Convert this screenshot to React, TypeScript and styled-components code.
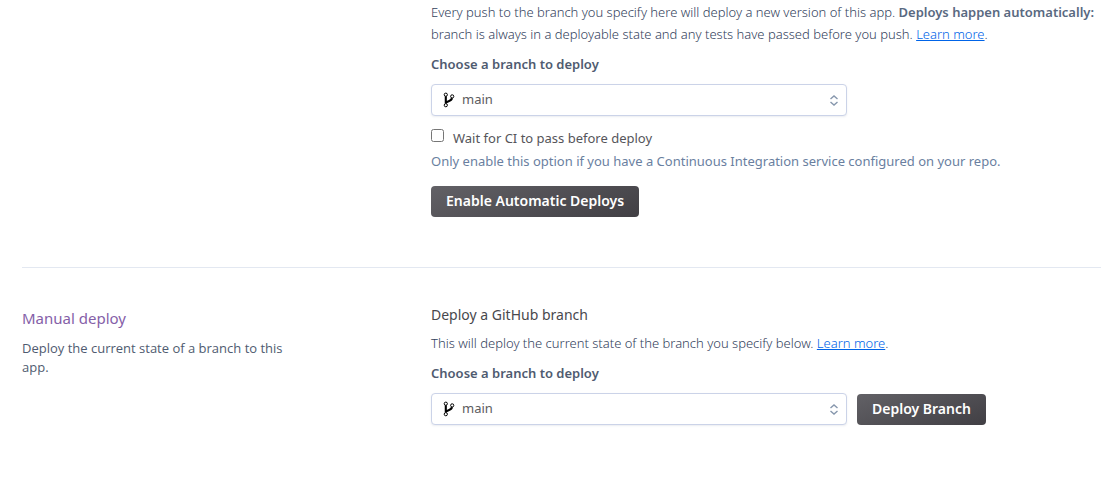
import React from 'react';
import styled, { createGlobalStyle } from 'styled-components';

const GlobalStyle = createGlobalStyle`
  * { box-sizing: border-box; }
  body {
    margin: 0;
    background: #fff;
    color: #596981;
    font: 400 13px/22px "Noto Sans", sans-serif;
    overflow-x: hidden;
  }
`;

const Page = styled.main`
  padding-left: 22px;
  overflow: hidden;
`;

const Section = styled.section`
  display: grid;
  grid-template-columns: 409px minmax(0, 1fr);
  padding: 39px 0 50px;

  & + & { border-top: 1px solid #e3e8f1; }
  &:first-child { padding-top: 1px; }
`;

const Side = styled.div`
  max-width: 270px;
`;

const SideTitle = styled.h2`
  margin: 0 0 10px;
  font-size: 15px;
  line-height: 22px;
  font-weight: 400;
  color: #8560a8;
`;

const SideText = styled.p`
  margin: 0;
  font-family: "Open Sans", "Noto Sans", sans-serif;
  line-height: 19px;
  color: #4f5b70;
`;

const Content = styled.div`
  min-width: 0;
`;

const Title = styled.h3`
  margin: 0 0 9px;
  font-size: 14px;
  line-height: 16px;
  font-weight: 400;
  color: #48484d;
`;

const Text = styled.p`
  margin: 0 0 8px;
  font-weight: 300;
  color: #33425c;
  white-space: nowrap;
`;

const Strong = styled.strong`
  font-weight: 600;
  color: #596981;
`;

const Link = styled.a`
  color: #0064e8;
  text-decoration: underline;
`;

const FieldLabel = styled.label`
  display: block;
  margin-bottom: 9px;
  font-weight: 600;
  color: #4f5b70;
`;

const Row = styled.div`
  display: flex;
  align-items: flex-end;
  gap: 10px;
`;

const SelectBox = styled.div`
  position: relative;
  width: 416px;
`;

const Select = styled.select`
  display: block;
  width: 100%;
  height: 32px;
  padding: 0 30px 2px;
  appearance: none;
  border: 1px solid #cbd3e8;
  border-radius: 4px;
  background: #fff;
  box-shadow: 0 1px 2px rgba(60, 80, 120, 0.1);
  font: inherit;
  color: #5c5c60;
`;

const BranchMark = styled.svg`
  position: absolute;
  left: 12px;
  top: 8px;
  pointer-events: none;
`;

const Arrows = styled.svg`
  position: absolute;
  right: 8px;
  top: 11px;
  pointer-events: none;
`;

const CheckRow = styled.div`
  display: flex;
  gap: 9px;
  margin-top: 11px;
  margin-bottom: 1px;
  color: #55555a;
`;

const Check = styled.input`
  width: 13px;
  height: 13px;
  margin: 2px 0 0;
`;

const Hint = styled.p`
  margin: 0 0 14px;
  color: #6a7f9f;
`;

const Button = styled.button`
  height: 31px;
  padding: 0 15px 1px;
  border: 0;
  border-radius: 4px;
  background: linear-gradient(160deg, #626166, #413f44);
  color: #fff;
  font: inherit;
  font-size: 14px;
  font-weight: 600;
`;

function BranchSelect({ id }: { id: string }) {
  return (
    <SelectBox>
      <Select id={id} defaultValue="main">
        <option>main</option>
      </Select>
      <BranchMark width="12" height="16" viewBox="0 0 12 16" fill="none" stroke="#000" aria-hidden="true">
        <circle cx="2.8" cy="2.7" r="1.6" strokeWidth="1" />
        <circle cx="9.2" cy="4.4" r="1.6" strokeWidth="1" />
        <circle cx="2.8" cy="13.2" r="1.6" strokeWidth="1" />
        <path d="M2.8 4.3V11.6M8.9 6.2C8.7 8.4 7.3 8.6 5.6 9.2C4.2 9.7 2.8 10.2 2.8 11.6" strokeWidth="2.1" />
      </BranchMark>
      <Arrows width="10" height="11" viewBox="0 0 10 11" fill="none" stroke="#8797ad" strokeWidth="1.4" aria-hidden="true">
        <path d="M1.5 4L5 1L8.5 4M1.5 7L5 10L8.5 7" />
      </Arrows>
    </SelectBox>
  );
}

export default function App() {
  return (
    <>
      <GlobalStyle />
      <Page>
        <Section>
          <Side />
          <Content>
            <Text>
              Every push to the branch you specify here will deploy a new version of this app.{' '}
              <Strong>Deploys happen automatically:</Strong>
              <br />
              branch is always in a deployable state and any tests have passed before you push.{' '}
              <Link href="#automatic">Learn more</Link>.
            </Text>
            <FieldLabel htmlFor="auto-branch">Choose a branch to deploy</FieldLabel>
            <BranchSelect id="auto-branch" />
            <CheckRow>
              <Check type="checkbox" id="wait-ci" />
              <label htmlFor="wait-ci">Wait for CI to pass before deploy</label>
            </CheckRow>
            <Hint>Only enable this option if you have a Continuous Integration service configured on your repo.</Hint>
            <Button type="button">Enable Automatic Deploys</Button>
          </Content>
        </Section>
        <Section>
          <Side>
            <SideTitle>Manual deploy</SideTitle>
            <SideText>Deploy the current state of a branch to this app.</SideText>
          </Side>
          <Content>
            <Title>Deploy a GitHub branch</Title>
            <Text>
              This will deploy the current state of the branch you specify below.{' '}
              <Link href="#manual">Learn more</Link>.
            </Text>
            <FieldLabel htmlFor="manual-branch">Choose a branch to deploy</FieldLabel>
            <Row>
              <BranchSelect id="manual-branch" />
              <Button type="button">Deploy Branch</Button>
            </Row>
          </Content>
        </Section>
      </Page>
    </>
  );
}
